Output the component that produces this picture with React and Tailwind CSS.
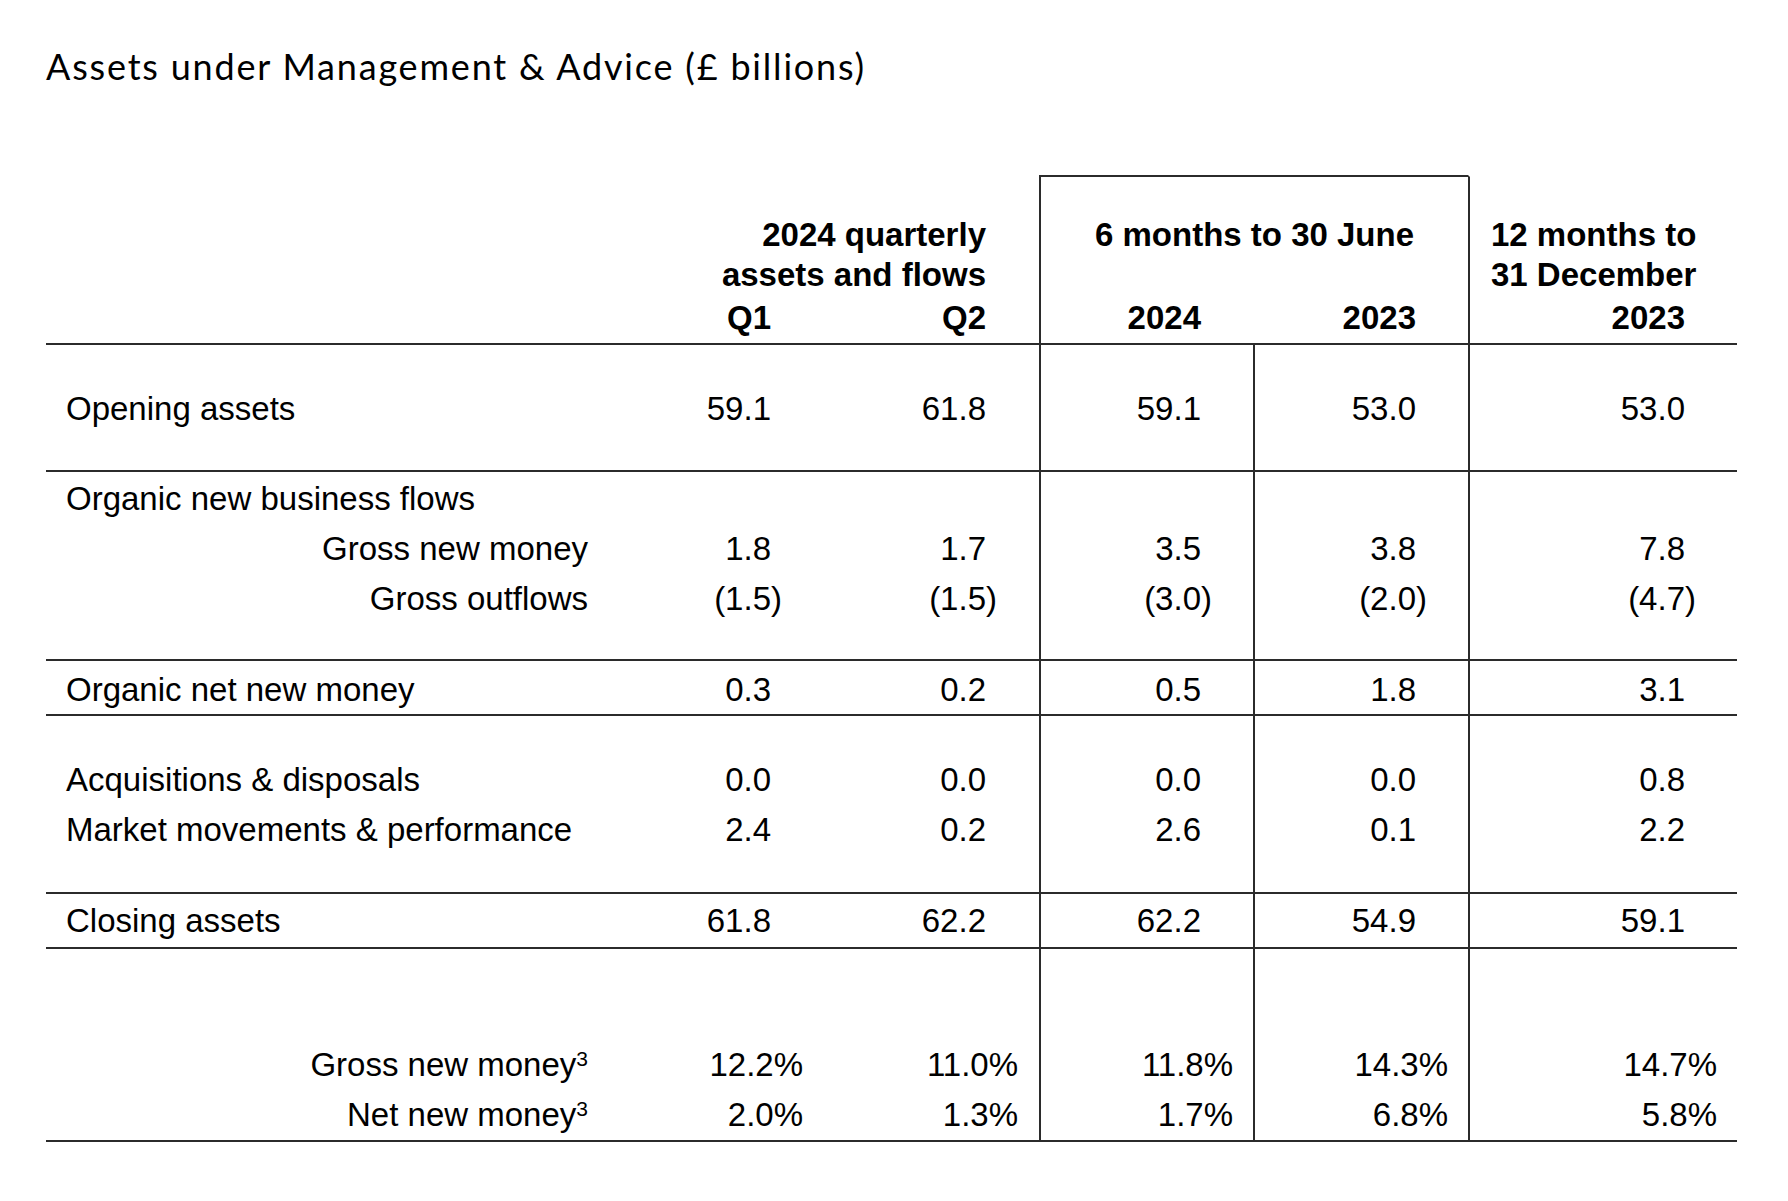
import React from "react";

const line = "border-[#2b2b2b]";

const sections = [
  {
    cell: "h-[125px] pt-[39px]",
    rows: [{ label: "Opening assets", values: ["59.1", "61.8", "59.1", "53.0", "53.0"] }],
  },
  {
    cell: "h-[187px] pt-[2px]",
    rows: [
      { label: "Organic new business flows", values: ["", "", "", "", ""] },
      { label: "Gross new money", right: true, values: ["1.8", "1.7", "3.5", "3.8", "7.8"] },
      { label: "Gross outflows", right: true, values: ["(1.5)", "(1.5)", "(3.0)", "(2.0)", "(4.7)"] },
    ],
  },
  {
    cell: "h-[53px] pt-[4px]",
    rows: [{ label: "Organic net new money", values: ["0.3", "0.2", "0.5", "1.8", "3.1"] }],
  },
  {
    cell: "h-[176px] pt-[39px]",
    rows: [
      { label: "Acquisitions & disposals", values: ["0.0", "0.0", "0.0", "0.0", "0.8"] },
      { label: "Market movements & performance", values: ["2.4", "0.2", "2.6", "0.1", "2.2"] },
    ],
  },
  {
    cell: "h-[53px] pt-[2px]",
    rows: [{ label: "Closing assets", values: ["61.8", "62.2", "62.2", "54.9", "59.1"] }],
  },
  {
    cell: "h-[191px] pt-[91px]",
    rows: [
      { label: "Gross new money", sup: "3", right: true, values: ["12.2%", "11.0%", "11.8%", "14.3%", "14.7%"] },
      { label: "Net new money", sup: "3", right: true, values: ["2.0%", "1.3%", "1.7%", "6.8%", "5.8%"] },
    ],
  },
];

// value columns: Q1, Q2, H1 2024, H1 2023, FY 2023
const colClass = [
  "pr-[53px]",
  "pr-[53px]",
  `pr-[52px] border-l-2 ${line}`,
  `pr-[52px] border-l-2 ${line}`,
  `pr-[52px] border-l-2 ${line}`,
];

const Value = ({ v }) => {
  if (!v) return <span>&nbsp;</span>;
  if (v.startsWith("(")) {
    return (
      <span>
        {v.slice(0, -1)}
        <span className="-mr-[11px]">)</span>
      </span>
    );
  }
  if (v.endsWith("%")) {
    return (
      <span>
        {v.slice(0, -1)}
        <span className="-mr-[32px]">%</span>
      </span>
    );
  }
  return <span>{v}</span>;
};

const Section = ({ section }) => (
  <div className={`grid grid-cols-[563px_215px_215px_214px_215px_269px] border-b-2 ${line}`}>
    <div className={`${section.cell} pl-[20px] pr-[21px]`}>
      {section.rows.map((r) => (
        <div key={r.label + (r.sup || "")} className={`leading-[50px] whitespace-nowrap ${r.right ? "text-right" : ""}`}>
          {r.label}
          {r.sup && <sup className="text-[21px]">{r.sup}</sup>}
        </div>
      ))}
    </div>
    {colClass.map((c, i) => (
      <div key={i} className={`${section.cell} ${c} text-right`}>
        {section.rows.map((r, j) => (
          <div key={j} className="leading-[50px] whitespace-nowrap">
            <Value v={r.values[i]} />
          </div>
        ))}
      </div>
    ))}
  </div>
);

export default function App() {
  return (
    <div className="min-h-screen bg-white text-black px-[46px] w-[1788px]">
      <h1 className="pt-[46px] pb-[89px] font-['Lato',sans-serif] text-[36px] leading-[40px] font-normal tracking-[1.8px]">
        Assets under Management &amp; Advice (£ billions)
      </h1>

      <div className="w-[1691px] font-['Liberation_Sans',Arial,sans-serif] text-[33px]">
        {/* header */}
        <div className={`grid grid-cols-[563px_430px_429px_269px] border-b-2 ${line} font-bold`}>
          <div className="h-[168px] border-t-2 border-transparent" />
          <div className="h-[168px] border-t-2 border-transparent pt-[38px]">
            <div className="pr-[53px] text-right leading-[40px]">
              <div>2024 quarterly</div>
              <div>assets and flows</div>
            </div>
            <div className="mt-[3px] grid grid-cols-[215px_215px] text-right leading-[40px]">
              <div className="pr-[53px]">Q1</div>
              <div className="pr-[53px]">Q2</div>
            </div>
          </div>
          <div className={`h-[168px] border-t-2 border-l-2 ${line} pt-[38px]`}>
            <div className="h-[80px] text-center leading-[40px]">6 months to 30 June</div>
            <div className="mt-[3px] grid grid-cols-[212px_215px] text-right leading-[40px]">
              <div className="pr-[52px]">2024</div>
              <div className="pr-[52px]">2023</div>
            </div>
          </div>
          <div className="h-[168px] border-t-2 border-l-2 border-t-transparent border-l-[#2b2b2b] pt-[38px]">
            <div className="pl-[21px] leading-[40px]">
              <div>12 months to</div>
              <div>31 December</div>
            </div>
            <div className="mt-[3px] pr-[52px] text-right leading-[40px]">2023</div>
          </div>
        </div>

        {sections.map((s, i) => (
          <Section key={i} section={s} />
        ))}
      </div>
    </div>
  );
}
